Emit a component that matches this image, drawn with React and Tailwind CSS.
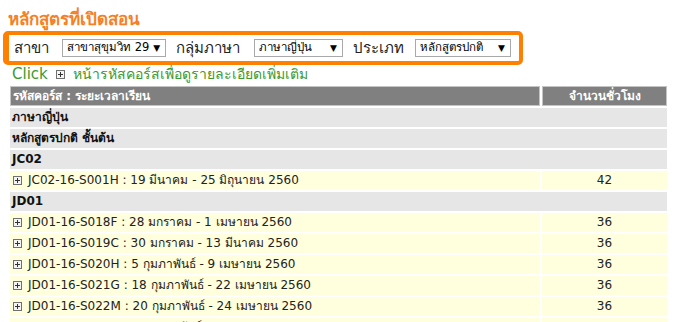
const courses = [
  { type: "group", label: "ภาษาญี่ปุ่น" },
  { type: "group", label: "หลักสูตรปกติ ชั้นต้น" },
  { type: "group", label: "JC02" },
  { type: "row", code: "JC02-16-S001H", period: "19 มีนาคม - 25 มิถุนายน 2560", hours: 42 },
  { type: "group", label: "JD01" },
  { type: "row", code: "JD01-16-S018F", period: "28 มกราคม - 1 เมษายน 2560", hours: 36 },
  { type: "row", code: "JD01-16-S019C", period: "30 มกราคม - 13 มีนาคม 2560", hours: 36 },
  { type: "row", code: "JD01-16-S020H", period: "5 กุมภาพันธ์ - 9 เมษายน 2560", hours: 36 },
  { type: "row", code: "JD01-16-S021G", period: "18 กุมภาพันธ์ - 22 เมษายน 2560", hours: 36 },
  { type: "row", code: "JD01-16-S022M", period: "20 กุมภาพันธ์ - 24 เมษายน 2560", hours: 36 },
  { type: "row", code: "JD01-16-S023K", period: "25 กุมภาพันธ์ - 29 เมษายน 2560", hours: 36 },
];

const PlusBox = () => (
  <svg width="9" height="9" viewBox="0 0 9 9" className="inline-block shrink-0">
    <rect x="0.5" y="0.5" width="8" height="8" fill="#f4f4f4" stroke="#707070" />
    <path d="M2 4.5h5M4.5 2v5" stroke="#333" strokeWidth="1" />
  </svg>
);

const FakeSelect = ({ value, width }) => (
  <div className={`flex h-[18px] shrink-0 items-center justify-between gap-[4px] overflow-hidden whitespace-nowrap border border-[#a9a9a9] bg-white pl-[4px] pr-[5px] text-[11.5px] leading-none text-black ${width}`}>
    <span>{value}</span>
    <span className="text-[9px]">▼</span>
  </div>
);

export default function App() {
  return (
    <div className="h-[322px] w-[675px] overflow-hidden bg-white font-['DejaVu_Sans',Tahoma,sans-serif] text-[#222]">
      <h1 className="pl-[8px] pt-[8px] text-[17px] font-bold leading-[22px] text-[#f58025]">หลักสูตรที่เปิดสอน</h1>

      <div className="ml-[3px] mt-[1px] flex h-[34px] w-[520px] items-center whitespace-nowrap rounded-[5px] border-4 border-l-[6px] border-[#ff8000] bg-white pl-[5px] text-[15px]">
        <span className="w-[48px] shrink-0">สาขา</span>
        <FakeSelect value="สาขาสุขุมวิท 29" width="w-[104px]" />
        <span className="ml-[10px] w-[78px] shrink-0">กลุ่มภาษา</span>
        <FakeSelect value="ภาษาญี่ปุ่น" width="w-[89px]" />
        <span className="ml-[10px] w-[62px] shrink-0">ประเภท</span>
        <FakeSelect value="หลักสูตรปกติ" width="w-[96px]" />
      </div>

      <div className="flex h-[18px] items-center gap-[8px] whitespace-nowrap pl-[12px] text-[14px] text-[#3a9a2e]">
        <span className="text-[15px]">Click</span>
        <PlusBox />
        <span>หน้ารหัสคอร์สเพื่อดูรายละเอียดเพิ่มเติม</span>
      </div>

      <table className="ml-[8px] mt-[1px] w-[661px] border-separate border-spacing-[2px] text-[12px] leading-[15px]">
        <thead>
          <tr>
            <th className="h-[20px] border border-[#c4c4c4] bg-[#808080] p-0 pl-[2px] text-left font-bold text-white">รหัสคอร์ส : ระยะเวลาเรียน</th>
            <th className="h-[20px] w-[125px] border border-[#c4c4c4] bg-[#808080] p-0 text-center font-bold text-white">จำนวนชั่วโมง</th>
          </tr>
        </thead>
        <tbody>
          {courses.map((c, i) =>
            c.type === "group" ? (
              <tr key={i}>
                <td colSpan={2} className="h-[19px] bg-[#e6e6e6] p-0 pl-[2px] font-bold text-[#111]">{c.label}</td>
              </tr>
            ) : (
              <tr key={i}>
                <td className="h-[19px] bg-[#ffffdd] p-0 pl-[3px]">
                  <div className="flex items-center gap-[6px] whitespace-nowrap">
                    <PlusBox />
                    <span>{c.code} : {c.period}</span>
                  </div>
                </td>
                <td className="h-[19px] bg-[#ffffdd] p-0 text-center">{c.hours}</td>
              </tr>
            )
          )}
        </tbody>
      </table>
    </div>
  );
}
